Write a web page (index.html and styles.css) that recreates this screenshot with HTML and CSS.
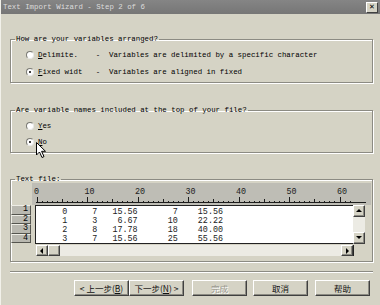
FILE: index.html
```html
<!DOCTYPE html>
<html lang="en">
<head>
  <meta charset="UTF-8" />
  <title>Text Import Wizard</title>
  <link rel="stylesheet" href="styles.css">
</head>
<body>

  <div class="window">

    <!-- Title bar -->
    <div class="titlebar">
      <span class="title">Text Import Wizard - Step 2 of 6</span>
      <span class="close">&#x2715;</span>
    </div>

    <div class="content">

      <!-- Arrangement -->
      <fieldset class="group g-arrange">
        <legend>How are your variables arranged?</legend>
        <div class="opt"><span class="radio"></span><span class="label"><u>D</u>elimite.    -  Variables are delimited by a specific character</span></div>
        <div class="opt"><span class="radio checked"></span><span class="label"><u>F</u>ixed widt   -  Variables are aligned in fixed</span></div>
      </fieldset>

      <!-- Names -->
      <fieldset class="group g-names">
        <legend>Are variable names included at the top of your file?</legend>
        <div class="opt"><span class="radio"></span><span class="label"><u>Y</u>es</span></div>
        <div class="opt"><span class="radio checked"></span><span class="label"><u>N</u>o</span></div>
      </fieldset>

      <!-- Preview -->
      <fieldset class="group g-file">
        <legend>Text file:</legend>
        <div class="ruler">
          <svg width="338" height="22" viewBox="0 0 338 22">
            <g fill="#1c1c1c" font-family="Liberation Mono, monospace" font-size="8.4">
              <text x="2" y="11">0</text>
              <text x="52.5" y="11">10</text>
              <text x="103" y="11">20</text>
              <text x="153.5" y="11">30</text>
              <text x="204" y="11">40</text>
              <text x="254.5" y="11">50</text>
              <text x="305" y="11">60</text>
            </g>
            <path id="ticks" fill="none" stroke="#1c1c1c" stroke-width="1"></path>
          </svg>
        </div>
        <div class="preview">
          <div class="rownums">
            <div class="rownum">1</div>
            <div class="rownum">2</div>
            <div class="rownum">3</div>
            <div class="rownum">4</div>
          </div>
          <pre class="data">     0     7   15.56       7    15.56
     1     3    6.67      10    22.22
     2     8   17.78      18    40.00
     3     7   15.56      25    55.56</pre>
          <div class="vscroll">
            <div class="sbtn"><span class="arrow up"></span></div>
            <div class="track"></div>
            <div class="sbtn"><span class="arrow down"></span></div>
          </div>
        </div>
        <div class="hscroll">
          <div class="sbtn"><span class="arrow left"></span></div>
          <div class="sbtn thumb"></div>
          <div class="track"></div>
          <div class="sbtn"><span class="arrow right"></span></div>
        </div>
      </fieldset>

      <div class="separator"></div>

      <!-- Buttons -->
      <div class="buttons">
        <button class="btn">&lt; 上一步(<u>B</u>)</button>
        <button class="btn">下一步(<u>N</u>) &gt;</button>
        <button class="btn disabled gap-l">完成</button>
        <button class="btn gap-m">取消</button>
        <button class="btn gap-s">帮助</button>
      </div>
    </div>

    <!-- Mouse pointer -->
    <svg class="cursor" width="11" height="17" viewBox="0 0 11 17">
      <path d="M0.5 0.5 L0.5 13 L3.5 10 L6 15.5 L8 14.6 L5.6 9.3 L9.5 9.3 Z" fill="#fff" stroke="#000" stroke-width="1"/>
    </svg>
  </div>

  <script>
    // ruler ticks: one per column, taller every 5 and 10
    var d = 'M4 19.5 H334';
    for (var c = 0; c <= 62; c++) {
      var x = 4.5 + c * 5.05;
      var h = c % 10 === 0 ? 5 : (c % 5 === 0 ? 3 : 1);
      x = Math.round(x) + 0.5;
      d += ' M' + x + ' 19 V' + (19 - h);
    }
    document.getElementById('ticks').setAttribute('d', d);
  </script>
</body>
</html>
```

FILE: styles.css
```css
* {
  box-sizing: border-box;
  margin: 0;
  padding: 0;
}

body {
  background-color: #d5d3c5;
  font-family: 'Liberation Mono', monospace;
  font-size: 7.4px;
  line-height: 8px;
  color: #000;
}

.window {
  position: relative;
  width: 380px;
  height: 305px;
  background-color: #d5d3c5;
  border-left: 1px solid #f2f1ea;
}

/* Title bar */
.titlebar {
  height: 14px;
  background: linear-gradient(#858585, #767676);
  display: flex;
  align-items: center;
  justify-content: space-between;
  padding: 0 2px 0 2px;
}

.title {
  color: #dcdcdc;
  white-space: pre;
}

.close {
  width: 12px;
  height: 11px;
  background-color: #d5d3c5;
  border: 1px solid;
  border-color: #fff #404040 #404040 #fff;
  font-family: 'DejaVu Sans', sans-serif;
  font-size: 7px;
  font-weight: bold;
  line-height: 9px;
  text-align: center;
  color: #000;
}

.content {
  padding: 0 7px 0 9px;
}

/* Group boxes */
.group {
  border: 1px solid #8c8b83;
  box-shadow: 1px 1px 0 #fff, inset 1px 1px 0 #fff;
  min-width: 0;
}

.group legend {
  margin-left: 4px;
  padding: 0 1px;
  line-height: 8px;
}

.g-arrange {
  margin-top: 21px;
  padding: 3px 0 2px 0;
}

.g-arrange .opt {
  height: 17px;
}

.g-names {
  margin-top: 23px;
  padding: 4px 0 2px 0;
}

.g-names .opt {
  height: 16px;
}

.opt {
  display: flex;
  align-items: center;
  padding-left: 15px;
}

.radio {
  position: relative;
  width: 8px;
  height: 8px;
  border-radius: 50%;
  background-color: #fff;
  border: 1px solid;
  border-color: #7a7a74 #e8e8e8 #e8e8e8 #7a7a74;
  margin-right: 4px;
}

.radio.checked::after {
  content: '';
  position: absolute;
  left: 2px;
  top: 2px;
  width: 2px;
  height: 2px;
  border-radius: 50%;
  background-color: #000;
}

.label {
  white-space: pre;
}

/* Preview */
.g-file {
  margin-top: 22px;
  padding: 0 0 5px 0;
}

.ruler {
  height: 22px;
  margin-left: 21px;
  margin-right: 1px;
  background-color: #bebdb5;
}

.ruler svg {
  display: block;
}

.preview {
  display: flex;
  height: 39px;
}

.rownums {
  width: 20px;
  margin-right: 4px;
}

.rownum {
  height: 9.5px;
  background-color: #b9b8b0;
  border: 1px solid;
  border-color: #eeede6 #55554f #55554f #eeede6;
  font-size: 8.4px;
  line-height: 7.5px;
  text-align: right;
  padding-right: 2px;
}

.data {
  width: 318px;
  background-color: #fff;
  border-left: 1px solid #222;
  border-top: 1px solid #222;
  border-bottom: 1px solid #222;
  font-family: 'Liberation Mono', monospace;
  font-size: 8.4px;
  line-height: 9px;
  padding: 2px 0 0 1px;
  color: #222;
  overflow: hidden;
}

.vscroll {
  width: 12px;
  display: flex;
  flex-direction: column;
  background-color: #ecebe4;
}

.hscroll {
  display: flex;
  height: 11px;
  margin: 1px 0 0 25px;
  width: 318px;
  background-color: #ecebe4;
  border-right: 1px solid #222;
}

.track {
  flex: 1;
}

.sbtn {
  position: relative;
  width: 12px;
  height: 12px;
  background-color: #d5d3c5;
  border: 1px solid;
  border-color: #fff #404040 #404040 #fff;
  box-shadow: inset -1px -1px 0 #8c8b83;
}

.hscroll .sbtn {
  width: 12px;
  height: 11px;
}

.arrow {
  position: absolute;
  left: 50%;
  top: 50%;
  width: 0;
  height: 0;
  border: 3px solid transparent;
}

.arrow.up {
  border-bottom-color: #000;
  margin: -5px 0 0 -3px;
}

.arrow.down {
  border-top-color: #000;
  margin: -2px 0 0 -3px;
}

.arrow.left {
  border-right-color: #000;
  margin: -3px 0 0 -5px;
}

.arrow.right {
  border-left-color: #000;
  margin: -3px 0 0 -1px;
}

.separator {
  margin-top: 9px;
  border-top: 1px solid #8c8b83;
  border-bottom: 1px solid #fff;
}

/* Buttons */
.buttons {
  display: flex;
  margin-top: 7px;
  padding-left: 64px;
}

.btn {
  width: 55px;
  height: 16px;
  background-color: #d5d3c5;
  border: 1px solid;
  border-color: #fff #404040 #404040 #fff;
  box-shadow: inset -1px -1px 0 #8c8b83;
  font-family: 'Noto Sans CJK SC', sans-serif;
  font-size: 8.5px;
  line-height: 12px;
  color: #111;
  white-space: nowrap;
}

.btn.disabled {
  color: #9a998f;
  text-shadow: 1px 1px 0 #fff;
}

.gap-l {
  margin-left: 8px;
}

.gap-m {
  margin-left: 6px;
}

.gap-s {
  margin-left: 7px;
}

.cursor {
  position: absolute;
  left: 35px;
  top: 142px;
}
```
